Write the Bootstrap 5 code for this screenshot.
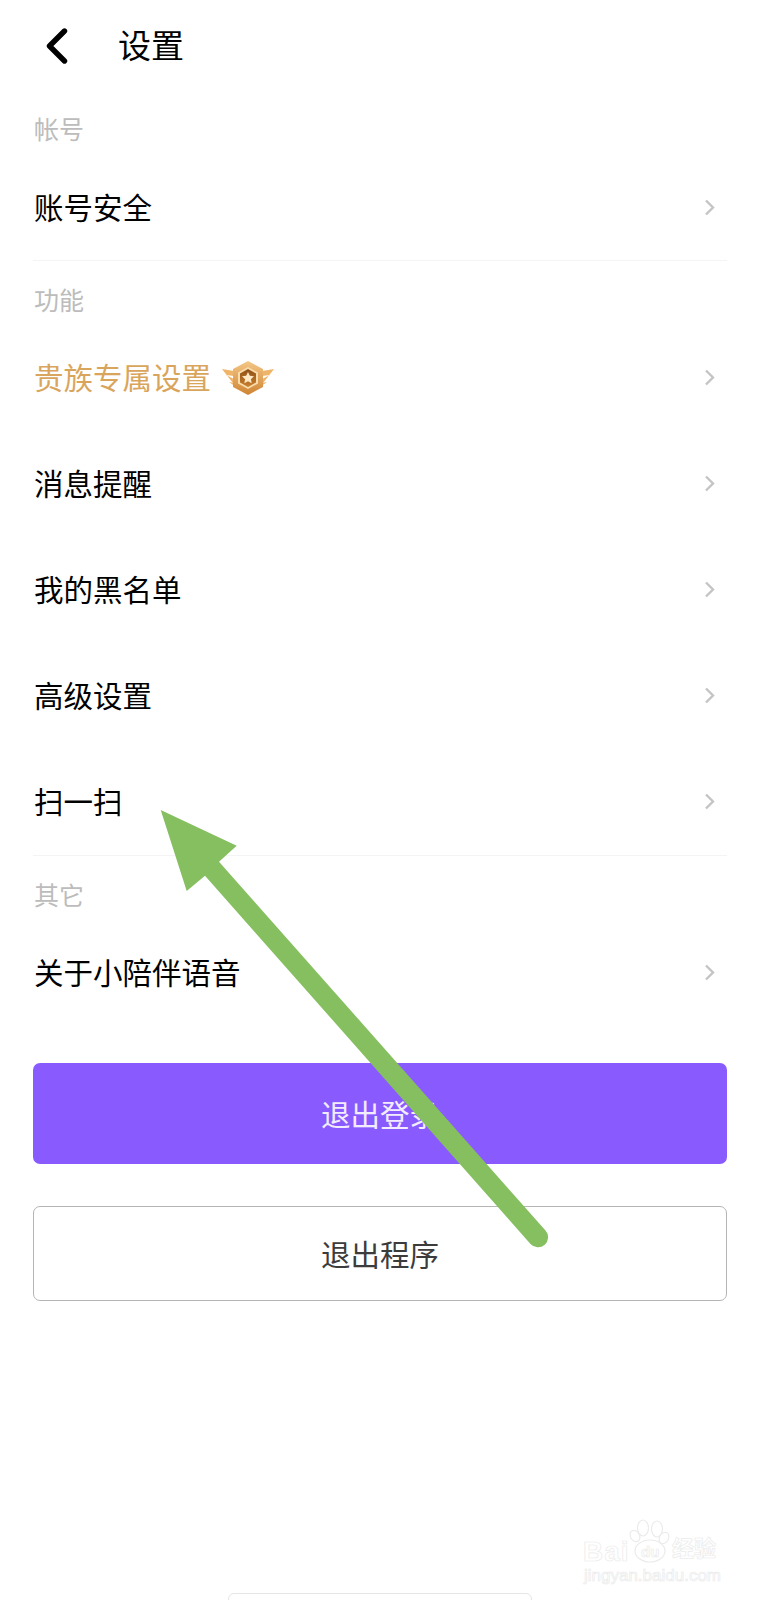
<!DOCTYPE html>
<html lang="zh-CN">
<head>
    <meta charset="UTF-8">
    <meta name="viewport" content="width=device-width, initial-scale=1.0">
    <title>设置</title>
    <link href="https://cdn.jsdelivr.net/npm/bootstrap@5.3.3/dist/css/bootstrap.min.css" rel="stylesheet">
    <style>
        body { font-family: "Liberation Sans", "Noto Sans CJK SC", sans-serif; background: #fff; color: #000; }
        .screen { position: relative; width: 760px; height: 1600px; overflow: hidden; padding: 0 33px; }
        .top-bar { height: 92px; margin: 0 0 0 -33px; padding-left: 46px; gap: 50px; }
        .top-bar h1 { font-size: 33px; line-height: 1; margin: 0; font-weight: 400; }
        .group-box { border-bottom: 1px solid #f4f4f4; }
        .group-box.last { border-bottom: 0; }
        .group-name { font-size: 25px; line-height: 30px; color: #bcbcbc; padding-left: 1px; }
        .first-name { padding-top: 23px; padding-bottom: 11px; }
        .next-name { padding-top: 25px; padding-bottom: 9px; }
        .set-row { height: 106px; padding: 0 0 0 1px; border: 0; font-size: 29.5px; color: #000; background: transparent; }
        .set-row.short { height: 104px; }
        .set-row > span { margin-top: 3px; }
        .noble { color: #d9a55c; }
        .noble svg { margin: -3px 0 0 11px; }
        .go-next { margin: 0 12px 2px 0; }
        .btn-wrap { margin-top: 37px; gap: 42px; }
        .act-btn { font-size: 29.5px; border-radius: 7px; padding-top: 11px; padding-bottom: 6px; }
        .act-purple { height: 101px; background: #895bff; border: 0; color: #f3ecff; }
        .act-purple:hover { background: #895bff; color: #f3ecff; }
        .act-plain { height: 95px; background: #fff; border: 1px solid #b5b5b5; color: #3c3c3c; }
        .big-arrow { position: absolute; left: 0; top: 0; pointer-events: none; }
        .wm-mark { position: absolute; left: 582px; top: 1518px; width: 150px; height: 70px; color: #fff; }
        .wm-mark svg { position: absolute; left: 0; top: 0; }
        .wm-text { position: absolute; line-height: 1; white-space: nowrap; font-weight: 700; -webkit-text-stroke: .7px #ebebeb; }
        .wm-bai { left: 1px; top: 20px; font-size: 28px; letter-spacing: 1px; }
        .wm-du { left: 59px; top: 26px; font-size: 15px; }
        .wm-jy { left: 90px; top: 20px; font-size: 22px; }
        .wm-url { left: 2px; top: 49px; font-size: 17px; font-weight: 400; }
        .home-bar { position: absolute; left: 228px; top: 1593px; width: 304px; height: 12px; border: 1px solid #e6e6e6; border-radius: 6px; background: #fff; }
    </style>
</head>
<body>
    <div class="screen">
        <div class="top-bar d-flex align-items-center">
            <svg width="22" height="36" viewBox="0 0 22 36"><path d="M18.500 3 3.500 18l15 15" fill="none" stroke="#000" stroke-width="5.400" stroke-linecap="round" stroke-linejoin="round"/></svg>
            <h1>设置</h1>
        </div>

        <div class="group-box">
            <div class="group-name first-name">帐号</div>
            <div class="list-group list-group-flush">
                <div class="list-group-item set-row short d-flex justify-content-between align-items-center">
                    <span>账号安全</span>
                    <svg class="go-next" width="11" height="17" viewBox="0 0 11 17"><path d="M2 1.5 9 8.5l-7 7" fill="none" stroke="#c4c4c4" stroke-width="2.400"/></svg>
                </div>
            </div>
        </div>

        <div class="group-box">
            <div class="group-name next-name">功能</div>
            <div class="list-group list-group-flush">
                <div class="list-group-item set-row d-flex justify-content-between align-items-center">
                    <span class="noble d-flex align-items-center">贵族专属设置
                        <svg width="52" height="38" viewBox="0 0 52 38">
                            <defs>
                                <linearGradient id="gold" x1="0" y1="0" x2="0" y2="1"><stop offset="0" stop-color="#f4c787"/><stop offset="1" stop-color="#cf8433"/></linearGradient>
                                <linearGradient id="core" x1="0" y1="0" x2="0" y2="1"><stop offset="0" stop-color="#8f5016"/><stop offset="1" stop-color="#c9802f"/></linearGradient>
                            </defs>
                            <path d="M0 10 12 12v5l-8-1 8 4v4l-5-1 7 5z" fill="#efb468"/>
                            <path d="M52 10 40 12v5l8-1-8 4v4l5-1-7 5z" fill="#efb468"/>
                            <path d="M26 2 41 10v18L26 36 11 28V10z" fill="url(#gold)"/>
                            <path d="M26 8 36 13.500v11L26 30 16 24.500v-11z" fill="#f9dcab"/>
                            <path d="M26 10 34 14.500v9L26 28 18 23.500v-9z" fill="url(#core)"/>
                            <path d="m26 13 1.800 3.800 4.200.5-3.100 2.900.8 4.100-3.700-2.100-3.700 2.100.8-4.100-3.100-2.900 4.200-.5z" fill="#ffe9c4"/>
                        </svg>
                    </span>
                    <svg class="go-next" width="11" height="17" viewBox="0 0 11 17"><path d="M2 1.5 9 8.5l-7 7" fill="none" stroke="#c4c4c4" stroke-width="2.400"/></svg>
                </div>
                <div class="list-group-item set-row d-flex justify-content-between align-items-center">
                    <span>消息提醒</span>
                    <svg class="go-next" width="11" height="17" viewBox="0 0 11 17"><path d="M2 1.5 9 8.5l-7 7" fill="none" stroke="#c4c4c4" stroke-width="2.400"/></svg>
                </div>
                <div class="list-group-item set-row d-flex justify-content-between align-items-center">
                    <span>我的黑名单</span>
                    <svg class="go-next" width="11" height="17" viewBox="0 0 11 17"><path d="M2 1.5 9 8.5l-7 7" fill="none" stroke="#c4c4c4" stroke-width="2.400"/></svg>
                </div>
                <div class="list-group-item set-row d-flex justify-content-between align-items-center">
                    <span>高级设置</span>
                    <svg class="go-next" width="11" height="17" viewBox="0 0 11 17"><path d="M2 1.5 9 8.5l-7 7" fill="none" stroke="#c4c4c4" stroke-width="2.400"/></svg>
                </div>
                <div class="list-group-item set-row d-flex justify-content-between align-items-center">
                    <span>扫一扫</span>
                    <svg class="go-next" width="11" height="17" viewBox="0 0 11 17"><path d="M2 1.5 9 8.5l-7 7" fill="none" stroke="#c4c4c4" stroke-width="2.400"/></svg>
                </div>
            </div>
        </div>

        <div class="group-box last">
            <div class="group-name next-name">其它</div>
            <div class="list-group list-group-flush">
                <div class="list-group-item set-row d-flex justify-content-between align-items-center">
                    <span>关于小陪伴语音</span>
                    <svg class="go-next" width="11" height="17" viewBox="0 0 11 17"><path d="M2 1.5 9 8.5l-7 7" fill="none" stroke="#c4c4c4" stroke-width="2.400"/></svg>
                </div>
            </div>
        </div>

        <div class="btn-wrap d-flex flex-column">
            <button type="button" class="btn act-btn act-purple w-100">退出登录</button>
            <button type="button" class="btn act-btn act-plain w-100">退出程序</button>
        </div>

        <svg class="big-arrow" width="760" height="1600" viewBox="0 0 760 1600">
            <path d="M160.700 810 236.700 845.700 219 861.700 545.500 1230.500a10 10 0 0 1-15 13.500L205 875.700 186.700 891z" fill="#86bf60"/>
        </svg>

        <div class="wm-mark">
            <svg width="150" height="70" viewBox="0 0 150 70" fill="#fff" stroke="#ebebeb" stroke-width="1.200">
                <ellipse cx="61" cy="10" rx="5.500" ry="8"/>
                <ellipse cx="75" cy="11" rx="5.500" ry="8"/>
                <ellipse cx="53" cy="18" rx="4.500" ry="6" transform="rotate(-30 53 18)"/>
                <ellipse cx="82" cy="20" rx="4.500" ry="6" transform="rotate(30 82 20)"/>
                <ellipse cx="68" cy="33" rx="15" ry="11"/>
            </svg>
            <span class="wm-text wm-bai">Bai</span>
            <span class="wm-text wm-du">du</span>
            <span class="wm-text wm-jy">经验</span>
            <span class="wm-text wm-url">jingyan.baidu.com</span>
        </div>
        <div class="home-bar"></div>
    </div>
    <script src="https://cdn.jsdelivr.net/npm/bootstrap@5.3.3/dist/js/bootstrap.bundle.min.js"></script>
</body>
</html>
